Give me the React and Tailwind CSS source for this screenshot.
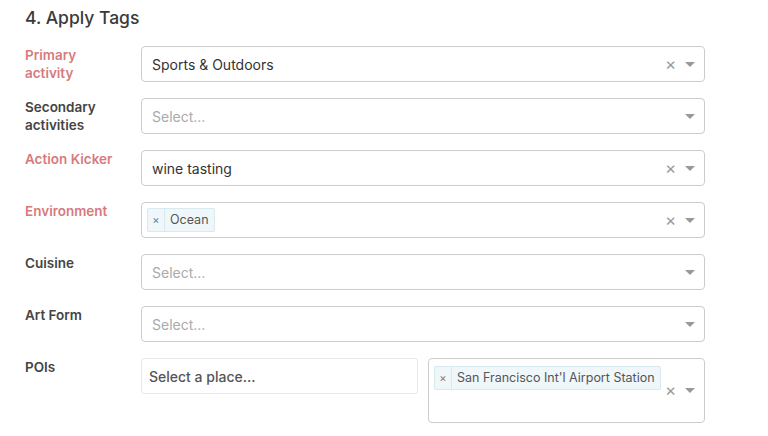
import React from "react";

const font = { fontFamily: "Inter, 'Noto Sans', sans-serif" };

function Arrow() {
  return (
    <span className="inline-block w-0 h-0 border-l-[5px] border-r-[5px] border-t-[5px] border-l-transparent border-r-transparent border-t-[#999]" />
  );
}

function Clear() {
  return <span className="shrink-0 text-[17px] leading-none text-[#999] w-[17px] text-center">×</span>;
}

function Tag({ children }) {
  return (
    <div className="flex items-stretch h-[24px] bg-[#eff7fa] border border-[#d8e9f0] rounded-[2px] text-[12.5px] text-[#555] whitespace-nowrap">
      <span className="flex items-center justify-center w-[17px] border-r border-[#d8e9f0] text-[11px] text-[#777]">×</span>
      <span className="flex items-center px-[5px]">{children}</span>
    </div>
  );
}

function Select({ value, placeholder, clear, tag }) {
  return (
    <div className="flex-1 h-[36px] border border-[#ccc] rounded-[4px] bg-white flex items-center">
      <div className="flex-1 flex items-center pl-[5px] min-w-0">
        {tag ? (
          <Tag>{tag}</Tag>
        ) : value ? (
          <span className="pl-[5px] text-[14px] text-[#333]">{value}</span>
        ) : (
          <span className="pl-[5px] text-[14px] text-[#aaa]">{placeholder}</span>
        )}
      </div>
      {clear && <Clear />}
      <div className="w-[25px] shrink-0 flex items-center justify-start pl-[6px] pr-[5px]">
        <Arrow />
      </div>
    </div>
  );
}

function Row({ label, red, children }) {
  return (
    <div className="flex items-start mb-[16px]">
      <div
        className={`w-[116px] pr-2 text-[13.5px] leading-[18px] font-semibold ${
          red ? "text-[#d77a7d]" : "text-[#444]"
        }`}
      >
        {label}
      </div>
      <div className="w-[564px] flex">{children}</div>
    </div>
  );
}

export default function App() {
  return (
    <div className="w-[768px] h-[436px] bg-white overflow-hidden pl-[25px] pt-[6px]" style={font}>
      <h2 className="text-[17.5px] leading-[24px] font-medium text-[#3a3a3a] mb-[16px]">4. Apply Tags</h2>
      <Row label={<>Primary<br />activity</>} red>
        <Select value="Sports & Outdoors" clear />
      </Row>
      <Row label={<>Secondary<br />activities</>}>
        <Select placeholder="Select..." />
      </Row>
      <Row label="Action Kicker" red>
        <Select value="wine tasting" clear />
      </Row>
      <Row label="Environment" red>
        <Select tag="Ocean" clear />
      </Row>
      <Row label="Cuisine">
        <Select placeholder="Select..." />
      </Row>
      <Row label="Art Form">
        <Select placeholder="Select..." />
      </Row>
      <Row label="POIs">
        <div className="w-[277px] h-[36px] border border-[#e8e8e8] rounded-[3px] flex items-center pl-[7px] text-[14px] font-medium text-[#555]">
          Select a place...
        </div>
        <div className="w-[277px] ml-[10px] h-[65px] border border-[#ccc] rounded-[4px] flex">
          <div className="flex-1 pt-[5px] pl-[5px] min-w-0">
            <div className="inline-flex">
              <Tag>San Francisco Int'l Airport Station</Tag>
            </div>
          </div>
          <div className="flex items-center shrink-0">
            <Clear />
            <div className="w-[25px] flex items-center pl-[6px] pr-[5px]">
              <Arrow />
            </div>
          </div>
        </div>
      </Row>
    </div>
  );
}
